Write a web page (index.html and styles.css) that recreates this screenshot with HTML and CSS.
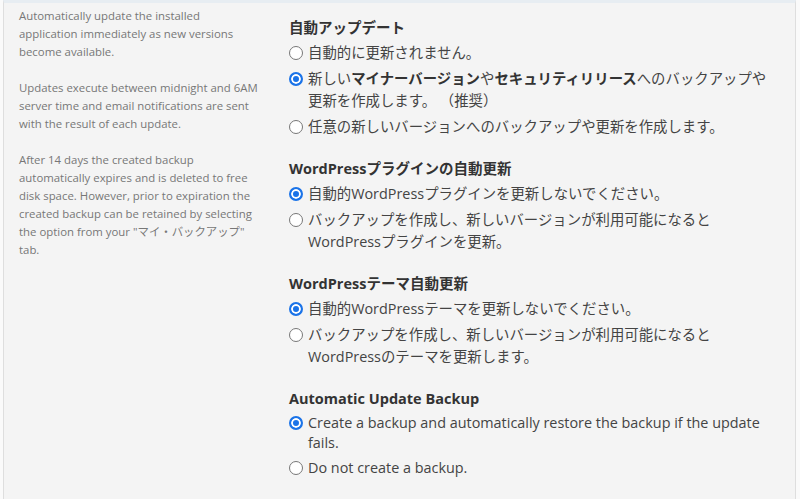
FILE: index.html
```html
<!DOCTYPE html>
<html lang="ja">
<head>
    <meta charset="UTF-8">
    <meta name="viewport" content="width=device-width, initial-scale=1.0">
    <title>自動アップデート</title>
    <link rel="stylesheet" href="styles.css">
</head>
<body>
    <div class="panel">
        <div class="help">
            <p>Automatically update the installed application immediately as new versions become available.</p>
            <p>Updates execute between midnight and 6AM server time and email notifications are sent with the result of each update.</p>
            <p>After 14 days the created backup automatically expires and is deleted to free disk space. However, prior to expiration the created backup can be retained by selecting the option from your "マイ・バックアップ" tab.</p>
        </div>
        <form class="settings">
            <div class="group">
                <h3>自動アップデート</h3>
                <label class="option"><input type="radio" name="core" value="none"><span>自動的に更新されません。</span></label>
                <label class="option"><input type="radio" name="core" value="minor" checked><span>新しい<b>マイナーバージョン</b>や<b>セキュリティリリース</b>へのバックアップや更新を作成します。 （推奨）</span></label>
                <label class="option"><input type="radio" name="core" value="all"><span>任意の新しいバージョンへのバックアップや更新を作成します。</span></label>
            </div>
            <div class="group">
                <h3>WordPressプラグインの自動更新</h3>
                <label class="option"><input type="radio" name="plugins" value="none" checked><span>自動的WordPressプラグインを更新しないでください。</span></label>
                <label class="option"><input type="radio" name="plugins" value="all"><span>バックアップを作成し、新しいバージョンが利用可能になるとWordPressプラグインを更新。</span></label>
            </div>
            <div class="group">
                <h3>WordPressテーマ自動更新</h3>
                <label class="option"><input type="radio" name="themes" value="none" checked><span>自動的WordPressテーマを更新しないでください。</span></label>
                <label class="option"><input type="radio" name="themes" value="all"><span>バックアップを作成し、新しいバージョンが利用可能になるとWordPressのテーマを更新します。</span></label>
            </div>
            <div class="group group-en">
                <h3>Automatic Update Backup</h3>
                <label class="option"><input type="radio" name="backup" value="restore" checked><span>Create a backup and automatically restore the backup if the update fails.</span></label>
                <label class="option"><input type="radio" name="backup" value="none"><span>Do not create a backup.</span></label>
            </div>
        </form>
    </div>
</body>
</html>
```

FILE: styles.css
```css
body {
    margin: 0;
    background-color: #fafafa;
    font-family: "Open Sans", "Noto Sans CJK JP", sans-serif;
    color: #333;
}
.panel {
    display: grid;
    grid-template-columns: 266px 1fr;
    margin: 0 4px 0 3px;
    min-height: 499px;
    background-color: #f4f4f4;
    border-left: 1px solid #dedede;
    border-right: 1px solid #dedede;
    border-top: 3px solid #e7edf2;
    box-sizing: border-box;
}
.help {
    padding: 4px 10px 0 15px;
    font-size: 11.4px;
    line-height: 18px;
    color: #777;
}
.help p {
    margin: 0 0 18px;
}
.settings {
    padding: 14px 18px 0 19px;
}
.group {
    margin-bottom: 20px;
}
.group h3 {
    margin: 0 0 3px;
    font-size: 14.5px;
    line-height: 22px;
    font-weight: bold;
    color: #333;
}
.option {
    display: flex;
    align-items: flex-start;
    margin-bottom: 4px;
    font-size: 14.4px;
    line-height: 22px;
    color: #444;
    cursor: pointer;
}
/* latin-only text sits on tighter lines */
.group-en .option {
    line-height: 20px;
    margin-bottom: 5px;
}
.group-en .option input {
    margin-top: 3px;
}
/* round radio, gray ring / blue ring with dot when selected */
.option input {
    -webkit-appearance: none;
    appearance: none;
    flex: none;
    box-sizing: border-box;
    width: 14px;
    height: 14px;
    margin: 4px 5px 0 0;
    border: 1.5px solid #777;
    border-radius: 50%;
    background-color: #fff;
}
.option input:checked {
    border: 2px solid #1a73e8;
    background-color: #1a73e8;
    box-shadow: inset 0 0 0 2px #fff;
}
.option b {
    color: #333;
}
```
